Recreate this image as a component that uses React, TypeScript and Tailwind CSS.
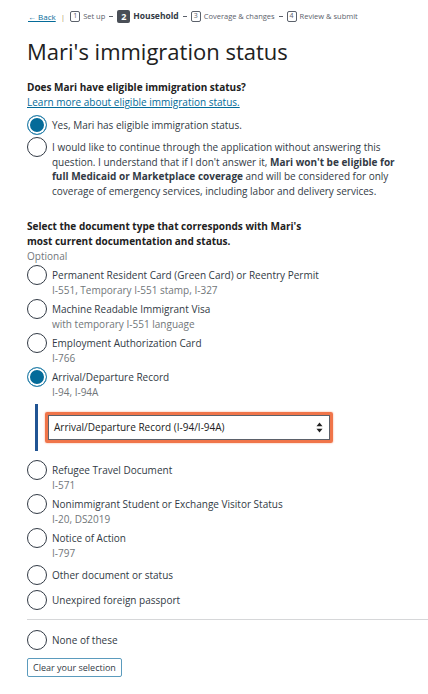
import type { ReactNode } from "react"

function Radio({ checked = false }: { checked?: boolean }) {
  if (checked) {
    return (
      <span className="mt-[-3px] block h-5 w-5 shrink-0 rounded-full border border-[#2f84ad] bg-[#046b99] shadow-[inset_0_0_0_2px_white]" />
    )
  }
  return <span className="mt-[-3px] block h-5 w-5 shrink-0 rounded-full border-[1.5px] border-[#323a45] bg-white" />
}

function Option({ title, sub, checked }: { title: ReactNode; sub?: string; checked?: boolean }) {
  return (
    <div className="flex gap-[5px]">
      <Radio checked={checked} />
      <div className="leading-[15px]">
        <div className="text-[#323a45]">{title}</div>
        {sub && <div className="text-[#71767a]">{sub}</div>}
      </div>
    </div>
  )
}

function Step({ n, label, current }: { n: number; label: string; current?: boolean }) {
  if (current) {
    return (
      <span className="flex items-center gap-[3px]">
        <span className="flex h-[13px] w-[13px] items-center justify-center rounded-[2px] bg-[#4a4f57] text-[9px] font-bold text-white">
          {n}
        </span>
        <span className="text-[8.5px] font-bold text-[#323a45]">{label}</span>
      </span>
    )
  }
  return (
    <span className="flex items-center gap-[3px]">
      <span className="flex h-[11px] w-[10px] items-center justify-center rounded-[2px] border border-[#5b616b] text-[7px] text-[#5b616b]">
        {n}
      </span>
      <span className="text-[7.5px] text-[#5b616b]">{label}</span>
    </span>
  )
}

function Dash() {
  return <span className="mx-[1px] block h-[1.5px] w-[4px] bg-[#5b616b]" />
}

export default function App() {
  return (
    <div className="min-h-[694px] bg-white font-['Open_Sans',sans-serif] text-[10px] text-[#212121]">
      {/* Breadcrumb */}
      <div className="flex items-center gap-[3px] pl-[28px] pt-[10px] text-[8px] text-[#5b616b]">
        <a className="text-[#046b99] underline">← Back</a>
        <span className="px-[2px] text-[#b0976a]">|</span>
        <Step n={1} label="Set up" />
        <Dash />
        <Step n={2} label="Household" current />
        <Dash />
        <Step n={3} label="Coverage & changes" />
        <Dash />
        <Step n={4} label="Review & submit" />
      </div>

      <div className="pl-[27px]">
        <h1 className="mt-[14px] text-[22px] leading-[28px] font-normal text-[#212121]">Mari's immigration status</h1>

        {/* Question 1 */}
        <div className="mt-[15px] w-[376px]">
          <div className="font-bold leading-[15px]">Does Mari have eligible immigration status?</div>
          <a className="leading-[15px] text-[#046b99] underline">Learn more about eligible immigration status.</a>
          <div className="mt-[8px] flex flex-col gap-[5px]">
            <Option checked title="Yes, Mari has eligible immigration status." />
            <div className="flex gap-[5px]">
              <Radio />
              <div className="leading-[14.5px] text-[#323a45]">
                I would like to continue through the application without answering this question. I understand
                that if I don't answer it, <b>Mari won't be eligible for full Medicaid or Marketplace coverage</b>{" "}
                and will be considered for only coverage of emergency services, including labor and delivery
                services.
              </div>
            </div>
          </div>
        </div>

        {/* Question 2 */}
        <div className="mt-[21px]">
          <div className="w-[275px] font-bold leading-[15px]">
            Select the document type that corresponds with Mari's most current documentation and status.
          </div>
          <div className="leading-[15px] text-[#71767a]">Optional</div>

          <div className="mt-[4px] flex flex-col gap-[4px]">
            <Option title="Permanent Resident Card (Green Card) or Reentry Permit" sub="I-551, Temporary I-551 stamp, I-327" />
            <Option title="Machine Readable Immigrant Visa" sub="with temporary I-551 language" />
            <Option title="Employment Authorization Card" sub="I-766" />
            <Option checked title="Arrival/Departure Record" sub="I-94, I-94A" />
          </div>

          <div className="mt-[4px] ml-[8px] border-l-[3px] border-[#205493] py-[8px] pl-[7px]">
            <div className="w-[288px] rounded-[2px] border-[3px] border-[#f0754a] shadow-[0_0_2px_#f5a283]">
              <div className="flex h-[25px] items-center justify-between border-[1.5px] border-[#5b616b] bg-white pl-[5px] pr-[6px] text-[#212121]">
                <span>Arrival/Departure Record (I-94/I-94A)</span>
                <svg width="7" height="11" viewBox="0 0 7 11">
                  <path d="M3.5 0.5L6.5 4.3H0.5Z" fill="#212121" />
                  <path d="M3.5 10.5L6.5 6.7H0.5Z" fill="#212121" />
                </svg>
              </div>
            </div>
          </div>

          <div className="mt-[12px] flex flex-col gap-[4px]">
            <Option title="Refugee Travel Document" sub="I-571" />
            <Option title="Nonimmigrant Student or Exchange Visitor Status" sub="I-20, DS2019" />
            <Option title="Notice of Action" sub="I-797" />
            <div className="mt-[3px] flex flex-col gap-[8px]">
              <Option title="Other document or status" />
              <Option title="Unexpired foreign passport" />
            </div>
          </div>

          <div className="mt-[9px] border-t border-[#d6d7d9]" />

          <div className="mt-[13px]">
            <Option title="None of these" />
          </div>

          <button className="mt-[8px] rounded-[2px] border border-[#5b9bbd] px-[5px] py-[2px] text-[9px] leading-[13px] text-[#323a45]">
            Clear your selection
          </button>
        </div>
      </div>
    </div>
  )
}
